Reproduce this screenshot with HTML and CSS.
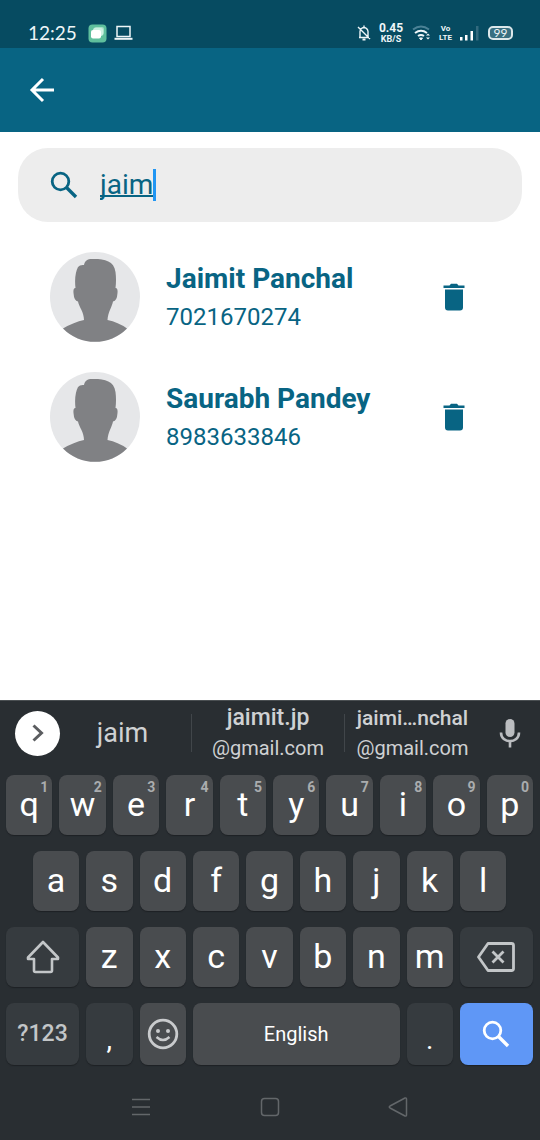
FILE: index.html
```html
<!DOCTYPE html>
<html lang="en">
<head>
<meta charset="utf-8">
<meta name="viewport" content="width=device-width, initial-scale=1">
<title>Contacts</title>
<link rel="stylesheet" href="styles.css">
</head>
<body>
<svg class="defs" width="0" height="0" aria-hidden="true">
  <symbol id="avatar" viewBox="0 0 90 90">
    <circle cx="45" cy="45" r="45" fill="#e6e7e9"/>
    <path fill="#808184" d="M34 13C35 8 38 6.500 44 7C55 7 64 9 65.500 20Q66.500 28 65.500 36Q68 36 67.500 41Q67 49 63 49.500C62 55 58 60 57.500 68Q68 70 77 76.500A45 45 0 0 1 13 76.500Q24 70 34 68C34 60 29 55 28 49.500Q24 49 23.500 41Q23 36 25.500 36Q24 23 28 15Q30 12.500 34 13Z"/>
  </symbol>
  <symbol id="trash" viewBox="0 0 22 28">
    <path fill="currentColor" d="M1 2.500H6.500L8 .800H14L15.500 2.500H21.500V5H.500V2.500ZM2 6.500H20V24.500Q20 27.500 17 27.500H5Q2 27.500 2 24.500Z"/>
  </symbol>
  <symbol id="search" viewBox="0 0 28 28">
    <circle cx="10.500" cy="10.500" r="8.300" fill="none" stroke="currentColor" stroke-width="2.800"/>
    <path d="M16.500 16.500L26 26" fill="none" stroke="currentColor" stroke-width="3.400"/>
  </symbol>
</svg>

<header>
  <div class="status">
    <span class="clock">12:25</span>
    <svg class="app-icon" width="19" height="19" viewBox="0 0 19 19" aria-hidden="true"><rect x=".5" y=".5" width="18" height="18" rx="4" fill="#5fbf9d"/><rect x="6" y="3" width="10" height="8" rx="2" fill="#a5e0c8"/><rect x="5" y="4" width="10" height="8" rx="2" fill="#cdf0e2"/><rect x="3" y="6" width="10" height="8.500" rx="2" fill="#fff"/></svg>
    <svg width="19" height="16" viewBox="0 0 19 16" fill="none" stroke="#eef6f8" aria-hidden="true"><rect x="3" y="1.500" width="13" height="10" stroke-width="1.500"/><path d="M.5 13.800H18.500" stroke-width="2"/></svg>
    <span class="spacer"></span>
    <svg class="bell" width="14" height="16" viewBox="0 0 14 16" fill="none" stroke="#eef6f8" stroke-width="1.400" aria-hidden="true"><path d="M2 12.500H12M3 12V6.500Q3.500 3 7 2.500Q10.500 3 11 6.500V12M7 .500V2.500M1 2L13 14"/><path d="M5.500 14.500H8.500" stroke-width="2"/></svg>
    <span class="speed"><b>0.45</b><small>KB/S</small></span>
    <svg class="wifi" width="20" height="16" viewBox="0 0 20 16" fill="none" stroke="#eef6f8" stroke-width="2" aria-hidden="true"><path d="M1 4.500Q9 -1.500 17 4.500" stroke="#4b8296"/><path d="M3 8Q9 3.500 15 8M6 11Q9 9 12 11"/><path d="M7.500 13L9 15L10.500 13Z" fill="#eef6f8" stroke-width="1"/><path d="M14 10.500L16 8.500L18 10.500ZM14 12.500L16 14.500L18 12.500Z" fill="#eef6f8" stroke="none"/></svg>
    <span class="volte"><b>Vo</b><b>LTE</b></span>
    <svg class="signal" width="20" height="16" viewBox="0 0 20 16" aria-hidden="true"><path d="M1 12H3.500V15.500H1ZM6 10H8.500V15.500H6ZM11.500 6H14V15.500H11.500Z" fill="#fff"/><path d="M17 1H19.500V15.500H17Z" fill="#326a7e"/></svg>
    <span class="battery">99</span>
  </div>
  <nav class="appbar">
    <button class="plain" type="button" aria-label="Back"><svg width="26" height="26" viewBox="0 0 26 26" fill="none" stroke="#fff" stroke-width="3"><path d="M25 13H3M14 2L3 13L14 24"/></svg></button>
  </nav>
</header>

<main>
  <label class="searchbox">
    <svg width="28" height="28" role="img" aria-label="Search"><use href="#search"/></svg>
    <span class="field"><input type="text" value="jaim" size="4"><i class="caret"></i></span>
  </label>
  <ul class="contacts">
    <li>
      <svg class="face" width="90" height="90" aria-hidden="true"><use href="#avatar"/></svg>
      <div class="who"><h2>Jaimit Panchal</h2><p>7021670274</p></div>
      <button class="plain" type="button" aria-label="Delete Jaimit Panchal"><svg width="22" height="28"><use href="#trash"/></svg></button>
    </li>
    <li>
      <svg class="face" width="90" height="90" aria-hidden="true"><use href="#avatar"/></svg>
      <div class="who"><h2>Saurabh Pandey</h2><p>8983633846</p></div>
      <button class="plain" type="button" aria-label="Delete Saurabh Pandey"><svg width="22" height="28"><use href="#trash"/></svg></button>
    </li>
  </ul>
</main>

<footer class="keyboard">
  <div class="suggestions">
    <button class="expand" type="button" aria-label="More"><svg width="14" height="18" viewBox="0 0 14 18" fill="none" stroke="#5b5d60" stroke-width="3"><path d="M2.500 1.500L10.500 9L2.500 16.500"/></svg></button>
    <button class="word first" type="button">jaim</button>
    <button class="word" type="button"><b>jaimit.jp</b><span>@gmail.com</span></button>
    <button class="word last" type="button"><b>jaimi…nchal</b><span>@gmail.com</span></button>
    <button class="plain mic" type="button" aria-label="Voice input"><svg width="22" height="30" viewBox="0 0 22 30"><rect x="6.500" y="1" width="9" height="18" rx="4.500" fill="#bbbdc0"/><path d="M2 14.500C2 26 20 26 20 14.500M11 23V29.500" fill="none" stroke="#bbbdc0" stroke-width="2.600"/></svg></button>
  </div>
  <div class="keys">
    <button class="key" type="button">q<sup>1</sup></button>
    <button class="key" type="button">w<sup>2</sup></button>
    <button class="key" type="button">e<sup>3</sup></button>
    <button class="key" type="button">r<sup>4</sup></button>
    <button class="key" type="button">t<sup>5</sup></button>
    <button class="key" type="button">y<sup>6</sup></button>
    <button class="key" type="button">u<sup>7</sup></button>
    <button class="key" type="button">i<sup>8</sup></button>
    <button class="key" type="button">o<sup>9</sup></button>
    <button class="key" type="button">p<sup>0</sup></button>
    <button class="key indent" type="button">a</button>
    <button class="key" type="button">s</button>
    <button class="key" type="button">d</button>
    <button class="key" type="button">f</button>
    <button class="key" type="button">g</button>
    <button class="key" type="button">h</button>
    <button class="key" type="button">j</button>
    <button class="key" type="button">k</button>
    <button class="key" type="button">l</button>
    <button class="key icon wide dark" type="button" aria-label="Shift"><svg width="34" height="34" viewBox="0 0 34 34" fill="none" stroke="#c3c6c8" stroke-width="2.600" stroke-linejoin="round"><path d="M17 2L32 17.500V19H26V30.500Q26 32 24.500 32H9.500Q8 32 8 30.500V19H2V17.500Z"/></svg></button>
    <button class="key" type="button">z</button>
    <button class="key" type="button">x</button>
    <button class="key" type="button">c</button>
    <button class="key" type="button">v</button>
    <button class="key" type="button">b</button>
    <button class="key" type="button">n</button>
    <button class="key" type="button">m</button>
    <button class="key icon wide dark" type="button" aria-label="Backspace"><svg width="38" height="30" viewBox="0 0 38 30" fill="none" stroke="#c3c6c8" stroke-width="2.800" stroke-linejoin="round"><path d="M11 1.500H34.500Q36.500 1.500 36.500 3.500V26.500Q36.500 28.500 34.500 28.500H11L1.500 15ZM15.500 9.500L26.500 20.500M26.500 9.500L15.500 20.500"/></svg></button>
    <button class="key icon wide dark symbols" type="button">?123</button>
    <button class="key dark low" type="button">,</button>
    <button class="key icon" type="button" aria-label="Emoji"><svg width="32" height="32" viewBox="0 0 32 32" fill="none" stroke="#c9cbcd" stroke-width="2.800"><circle cx="16" cy="16" r="13.800"/><path d="M9.500 19Q16 25 22.500 19" stroke-width="2.400"/><circle cx="11" cy="13" r="2" fill="#c9cbcd" stroke="none"/><circle cx="21" cy="13" r="2" fill="#c9cbcd" stroke="none"/></svg></button>
    <button class="key icon space" type="button">English</button>
    <button class="key dark low" type="button">.</button>
    <button class="key icon wide go" type="button" aria-label="Search"><svg width="28" height="28"><use href="#search"/></svg></button>
  </div>
  <nav class="system">
    <button class="plain" type="button" aria-label="Recent apps"><svg width="20" height="20" viewBox="0 0 20 20" stroke="#63676a" stroke-width="1.600"><path d="M1 2.500H19M1 10H19M1 17.500H19"/></svg></button>
    <button class="plain" type="button" aria-label="Home"><svg width="20" height="20" viewBox="0 0 20 20" fill="none" stroke="#63676a" stroke-width="1.500"><rect x="1.500" y="1.500" width="17" height="17" rx="3"/></svg></button>
    <button class="plain" type="button" aria-label="Back"><svg width="20" height="20" viewBox="0 0 20 20" fill="none" stroke="#63676a" stroke-width="1.500" stroke-linejoin="round"><path d="M17 1Q18.500 .500 18.500 2V18Q18.500 19.500 17 19L2 11Q.500 10 2 9Z"/></svg></button>
  </nav>
</footer>
</body>
</html>
```
FILE: styles.css
```css
* { box-sizing: border-box; }

body {
  margin: 0;
  min-height: 100vh;
  display: flex;
  flex-direction: column;
  background: #fff;
  color: #086483;
  font-family: Roboto, "Noto Sans", sans-serif;
}

svg { display: block; flex: none; }
.defs { position: absolute; }
button { font: inherit; border: 0; cursor: pointer; }
.plain { padding: 0; background: none; color: inherit; }

/* Status bar and app bar */
.status {
  height: 48px;
  padding: 18px 27px 0 28px;
  display: flex;
  align-items: center;
  background: #064b61;
  color: #eef6f8;
}
.clock { font: 19px/24px Lato, sans-serif; margin-right: 11px; }
.app-icon { margin-right: 7px; }
.spacer { flex: 1; }
.speed, .volte { display: flex; flex-direction: column; align-items: center; }
.speed { margin: 0 9px 0 8px; font-size: 12px; line-height: 11px; }
.speed small { font-size: 9px; line-height: 10px; font-weight: 700; }
.wifi { margin-right: 7px; }
.volte { font-size: 8px; line-height: 9px; margin-right: 7px; }
.signal { margin-right: 9px; }
.battery {
  width: 25px;
  height: 14px;
  border: 2px solid #dbe7ea;
  border-radius: 5px;
  background: #386f81;
  font: 12px/10px Lato, sans-serif;
  text-align: center;
}
.appbar {
  height: 84px;
  padding-left: 29px;
  display: flex;
  align-items: center;
  background: #086483;
}

/* Search and results */
main { flex: 1; padding: 16px 18px; }
.searchbox {
  height: 74px;
  padding: 0 32px;
  display: flex;
  align-items: center;
  gap: 22px;
  border-radius: 30px;
  background: #ededed;
}
.field { display: flex; align-items: center; }
.field input {
  field-sizing: content;
  padding: 0;
  border: 0;
  outline: 0;
  background: none;
  color: inherit;
  font: 28px/32px Roboto, sans-serif;
  text-decoration: underline;
  text-decoration-thickness: 2px;
  text-decoration-skip-ink: none;
}
.caret { width: 3px; height: 32px; background: #2196f3; }
.contacts { list-style: none; margin: 30px 0 0; padding: 0 57px 0 32px; }
.contacts li { display: flex; align-items: center; margin-bottom: 30px; }
.who { flex: 1; padding: 2px 0 0 26px; }
.who h2 { margin: 0 0 6px; font-size: 28px; line-height: 32px; font-weight: 700; }
.who p { margin: 0; font-size: 24px; line-height: 32px; }

/* On-screen keyboard */
.keyboard { background: #292e32; border-top: 1px solid #4a4f52; }
.suggestions {
  height: 74px;
  padding: 0 0 10px 15px;
  display: flex;
  align-items: center;
  color: #cfd1d3;
}
.expand {
  width: 45px;
  height: 45px;
  padding: 0;
  display: grid;
  place-items: center;
  border-radius: 50%;
  background: #fff;
}
.word {
  flex: 152;
  height: 38px;
  padding: 0;
  display: flex;
  flex-direction: column;
  align-items: center;
  justify-content: center;
  border-right: 1px solid #41464a;
  background: none;
  color: inherit;
  font-size: 20px;
  line-height: 30px;
}
.word b { font-size: 23px; font-weight: 500; }
.word.first { flex: 125; padding-right: 6px; font-size: 27px; }
.word.last { flex: 135; border: 0; }
.word.last b { font-size: 21px; }
.mic { width: 60px; display: grid; place-items: center; }
.keys {
  padding: 0 7px 0 6px;
  display: grid;
  grid-template-columns: repeat(20, 1fr);
  grid-template-rows: 60px 60px 60px 62px;
  gap: 16px 7px;
}
.key {
  grid-column: span 2;
  position: relative;
  min-width: 0;
  padding: 0 0 3px;
  display: flex;
  align-items: center;
  justify-content: center;
  border-radius: 8px;
  background: #494c4f;
  box-shadow: 0 1px 1px #1d2124;
  color: #fff;
  font-size: 34px;
  line-height: 40px;
}
.key sup {
  position: absolute;
  top: 4px;
  right: 4px;
  color: #aaacae;
  font-size: 14px;
  line-height: 16px;
  font-weight: 700;
}
.icon { padding: 0; }
.indent { grid-column: 2 / span 2; }
.wide { grid-column: span 3; }
.space { grid-column: span 8; font-size: 20px; }
.dark { background: #363b3f; }
.symbols { color: #c3c6c8; font-size: 23px; font-weight: 500; }
.low { padding: 12px 0 0; font-size: 28px; }
.go { background: #5f97f6; }
.system {
  height: 75px;
  padding: 9px 132px 0 131px;
  display: flex;
  align-items: center;
  justify-content: space-between;
}
```
